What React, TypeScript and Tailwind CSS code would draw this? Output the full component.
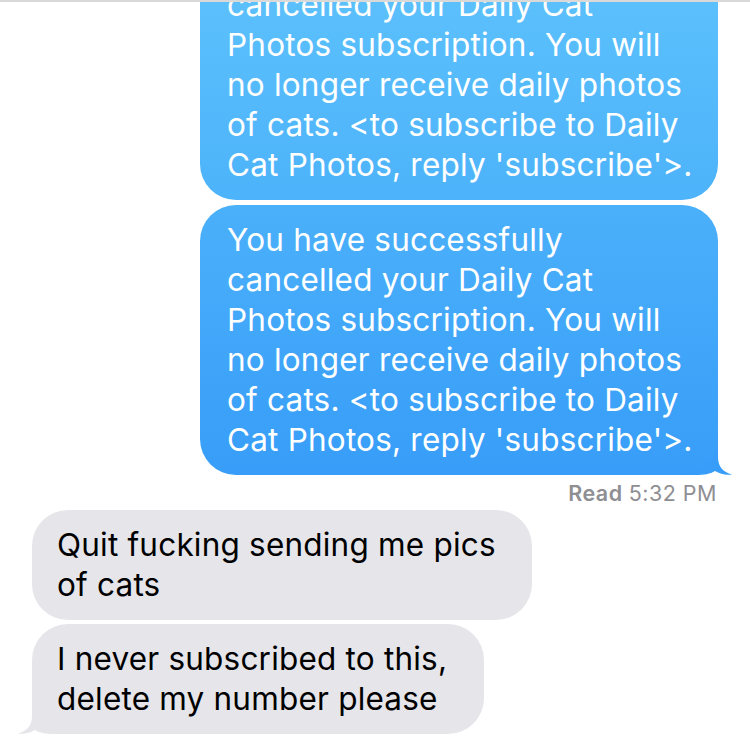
import React from 'react';

const blueLines = [
  'You have successfully',
  'cancelled your Daily Cat',
  'Photos subscription. You will',
  'no longer receive daily photos',
  "of cats. <to subscribe to Daily",
  "Cat Photos, reply 'subscribe'>.",
];

// drawn behind the bubble, so only the part outside the rounded corner shows
const Tail: React.FC<{ color: string; flip?: boolean }> = ({ color, flip }) => (
  <svg
    width="54"
    height="44"
    viewBox="0 0 54 44"
    className={flip ? 'absolute bottom-0 left-[-18px] -z-10 -scale-x-100' : 'absolute bottom-0 right-[-18px] -z-10'}
  >
    <path
      d="M0 0 H36 V26 C36 36 41 41 50 43.5 C44 44.5 38 43 33 40 C28 43 22 44 14 44 H0 Z"
      fill={color}
    />
  </svg>
);

const BlueBubble: React.FC<{ tail?: boolean; gradient: string }> = ({ tail, gradient }) => (
  <div className={`relative w-[518px] rounded-[36px] pl-[27px] pt-[15px] pb-[15px] text-white ${gradient}`}>
    {blueLines.map(line => (
      <div key={line} className="whitespace-nowrap">{line}</div>
    ))}
    {tail && <Tail color="#379df8" />}
  </div>
);

export default function App() {
  return (
    <div
      className="isolate h-[750px] w-[750px] overflow-hidden bg-white border-t-[2px] border-[#d9d9d9]"
      style={{ fontFamily: 'Inter, "Noto Sans", sans-serif' }}
    >
      <div className="mt-[-72px] flex flex-col text-[31.5px] leading-[40px] tracking-[0.2px]">
        {/* Outgoing */}
        <div className="flex flex-col items-end gap-[5px] pr-[32px]">
          <BlueBubble gradient="bg-gradient-to-b from-[#60c4fc] to-[#4db3fa]" />
          <BlueBubble tail gradient="bg-gradient-to-b from-[#4bb0fa] to-[#379df8]" />
        </div>
        <div className="flex justify-end pr-[33px] pt-[5px] text-[21.5px] leading-[26px] tracking-[0.5px] text-[#8e8e93]">
          <span className="font-semibold">Read</span>
          <span className="ml-[6px]">5:32 PM</span>
        </div>

        {/* Incoming */}
        <div className="mt-[4px] flex flex-col items-start gap-[4px] pl-[32px] text-black">
          <div className="w-[500px] rounded-[36px] bg-[#e5e5ea] pl-[25px] pt-[15px] pb-[15px]">
            <div className="whitespace-nowrap">Quit fucking sending me pics</div>
            <div className="whitespace-nowrap">of cats</div>
          </div>
          <div className="relative w-[452px] rounded-[36px] bg-[#e5e5ea] pl-[25px] pt-[15px] pb-[15px]">
            <div className="whitespace-nowrap">I never subscribed to this,</div>
            <div className="whitespace-nowrap">delete my number please</div>
            <Tail color="#e5e5ea" flip />
          </div>
        </div>
      </div>
    </div>
  );
}
